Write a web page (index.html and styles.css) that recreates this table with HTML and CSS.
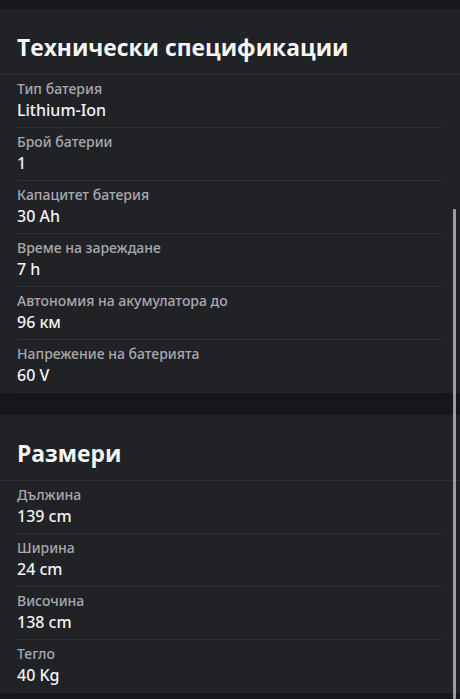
FILE: index.html
```html
<!DOCTYPE html>
<html lang="bg">
<head>
<meta charset="utf-8">
<link rel="stylesheet" href="styles.css">
</head>
<body>
<main class="page">
  <section class="card">
    <h2 class="card-title">Технически спецификации</h2>
    <dl class="specs">
      <div class="row"><dt>Тип батерия</dt><dd>Lithium-Ion</dd></div>
      <div class="row"><dt>Брой батерии</dt><dd>1</dd></div>
      <div class="row"><dt>Капацитет батерия</dt><dd>30 Ah</dd></div>
      <div class="row"><dt>Време на зареждане</dt><dd>7 h</dd></div>
      <div class="row"><dt>Автономия на акумулатора до</dt><dd>96 км</dd></div>
      <div class="row"><dt>Напрежение на батерията</dt><dd>60 V</dd></div>
    </dl>
  </section>
  <section class="card">
    <h2 class="card-title">Размери</h2>
    <dl class="specs">
      <div class="row"><dt>Дължина</dt><dd>139 cm</dd></div>
      <div class="row"><dt>Ширина</dt><dd>24 cm</dd></div>
      <div class="row"><dt>Височина</dt><dd>138 cm</dd></div>
      <div class="row"><dt>Тегло</dt><dd>40 Kg</dd></div>
    </dl>
  </section>
</main>
<div class="scrollbar"></div>
</body>
</html>
```
FILE: styles.css
```css
html, body {
  margin: 0;
  padding: 0;
  background: #16171b;
  height: 100%;
  overflow: hidden;
}
body {
  font-family: "Noto Sans", "Open Sans", sans-serif;
  color: #f2f2f2;
  position: relative;
}
.page {
  display: flex;
  flex-direction: column;
  gap: 22px;
  padding-top: 9px;
}
.card {
  background: #212226;
}
.card-title {
  margin: 0;
  padding: 11px 17px 0;
  height: 54px;
  display: flex;
  align-items: center;
  font-family: "Open Sans", "Noto Sans", sans-serif;
  font-size: 22.8px;
  font-weight: 700;
  color: #f6f6f6;
  border-bottom: 1px solid #2f3034;
}
.specs {
  margin: 0;
  padding: 0;
}
.row {
  margin: 0 17px;
  padding: 4px 0 6px;
  border-bottom: 1px solid #2f3034;
}
.specs .row:last-child {
  border-bottom-color: #26272b;
}
.row dt {
  font-size: 14px;
  line-height: 20px;
  font-weight: 500;
  color: #a8a9ad;
}
.row dd {
  margin: 0;
  font-size: 16px;
  line-height: 22px;
  font-weight: 500;
  color: #f2f2f2;
}
.scrollbar {
  position: absolute;
  left: 453px;
  top: 209px;
  width: 3px;
  height: 490px;
  background: #9b9c9f;
  border-radius: 1px;
}
```
